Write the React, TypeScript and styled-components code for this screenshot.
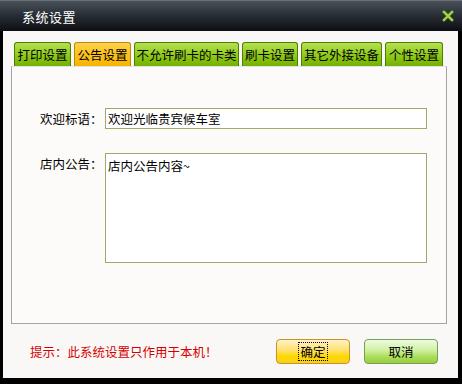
import React from "react";
import styled, { createGlobalStyle } from "styled-components";

const Global = createGlobalStyle`
  html, body { margin: 0; padding: 0; background: #000; }
  body { font-family: "Noto Sans CJK SC", "Liberation Sans", sans-serif; }
`;

const Frame = styled.div`
  width: 462px;
  height: 384px;
  background: #000;
  display: flex;
  flex-direction: column;
  box-sizing: border-box;
  padding: 0 4px 6px 3px;
`;

const TitleBar = styled.div`
  height: 31px;
  margin: 0 -4px 0 -3px;
  display: flex;
  align-items: center;
  justify-content: space-between;
  padding: 0 8px 0 22px;
  background: linear-gradient(#4a5058 0%, #2a3038 45%, #0c0e12 100%);
  border-top: 1px solid #6a7078;
  box-sizing: border-box;
`;

const Title = styled.div`
  color: #fff;
  font-size: 13px;
  letter-spacing: 0.5px;
`;

const Body = styled.div`
  flex: 1;
  background: #f9f8f6;
  display: flex;
  flex-direction: column;
  padding: 11px 0 0 8px;
`;

const TabRow = styled.div`
  display: flex;
  gap: 3px;
  padding-left: 3px;
  height: 24px;
`;

const Tab = styled.div<{ active?: boolean }>`
  height: 24px;
  box-sizing: border-box;
  display: flex;
  align-items: center;
  justify-content: center;
  font-size: 12.5px;
  color: #000;
  border: 1px solid ${p => (p.active ? "#b88a10" : "#4f7f00")};
  border-bottom: none;
  border-radius: 3px 3px 0 0;
  background: ${p =>
    p.active
      ? "linear-gradient(#ffd24a, #fcc21c 50%, #f7b400)"
      : "linear-gradient(#b4e050, #92cc1c 50%, #74b000)"};
  white-space: nowrap;
`;

const Panel = styled.div`
  width: 436px;
  height: 258px;
  box-sizing: border-box;
  border: 1px solid #a4a4a4;
  border-top-color: #e4e4e4;
  background: #fcfbf9;
  display: grid;
  grid-template-columns: 93px 322px;
  grid-template-rows: 21px 110px;
  row-gap: 24px;
  padding: 41px 0 0 0;
  align-content: start;
`;

const Label = styled.div`
  font-size: 12.5px;
  color: #000;
  padding-left: 28px;
  line-height: 21px;
  white-space: nowrap;
`;

const Field = styled.div<{ multi?: boolean }>`
  box-sizing: border-box;
  border: 1px solid #a2a868;
  background: #fff;
  font-size: 12.5px;
  color: #000;
  padding: ${p => (p.multi ? "4px 2px" : "0 2px")};
  line-height: ${p => (p.multi ? "16px" : "19px")};
`;

const Footer = styled.div`
  flex: 1;
  display: flex;
  align-items: center;
  padding: 0 20px 0 19px;
`;

const Tip = styled.div`
  color: #d40000;
  font-size: 12.5px;
  flex: 1;
`;

const Button = styled.div<{ kind: "ok" | "cancel" }>`
  width: 74px;
  height: 25px;
  box-sizing: border-box;
  margin-left: 14px;
  border-radius: 4px;
  display: flex;
  align-items: center;
  justify-content: center;
  font-size: 12.5px;
  color: #000;
  border: 1px solid ${p => (p.kind === "ok" ? "#c89420" : "#78a050")};
  background: ${p =>
    p.kind === "ok"
      ? "linear-gradient(#fff2c8, #ffe070 45%, #ffd800 70%, #f6d020)"
      : "linear-gradient(#eefbe2, #d0f0a0 45%, #a8dc58 75%, #98d040)"};
`;

const Focus = styled.span`
  outline: 1px dotted #000;
  padding: 1px 1px;
  line-height: 15px;
`;

const CloseIcon = () => (
  <svg width="12" height="12" viewBox="0 0 12 12">
    <path d="M2 2 L10 10 M10 2 L2 10" stroke="#a0d040" strokeWidth="2.6" strokeLinecap="square" />
  </svg>
);

const tabs = ["打印设置", "公告设置", "不允许刷卡的卡类", "刷卡设置", "其它外接设备", "个性设置"];
const widths = [57, 57, 105, 56, 81, 58];

export default function App() {
  return (
    <>
      <Global />
      <Frame>
        <TitleBar>
          <Title>系统设置</Title>
          <CloseIcon />
        </TitleBar>
        <Body>
          <TabRow>
            {tabs.map((t, i) => (
              <Tab key={t} active={i === 1} style={{ width: widths[i] }}>
                {t}
              </Tab>
            ))}
          </TabRow>
          <Panel>
            <Label>欢迎标语：</Label>
            <Field>欢迎光临贵宾候车室</Field>
            <Label>店内公告：</Label>
            <Field multi>店内公告内容~</Field>
          </Panel>
          <Footer>
            <Tip>提示：此系统设置只作用于本机！</Tip>
            <Button kind="ok">
              <Focus>确定</Focus>
            </Button>
            <Button kind="cancel">取消</Button>
          </Footer>
        </Body>
      </Frame>
    </>
  );
}
